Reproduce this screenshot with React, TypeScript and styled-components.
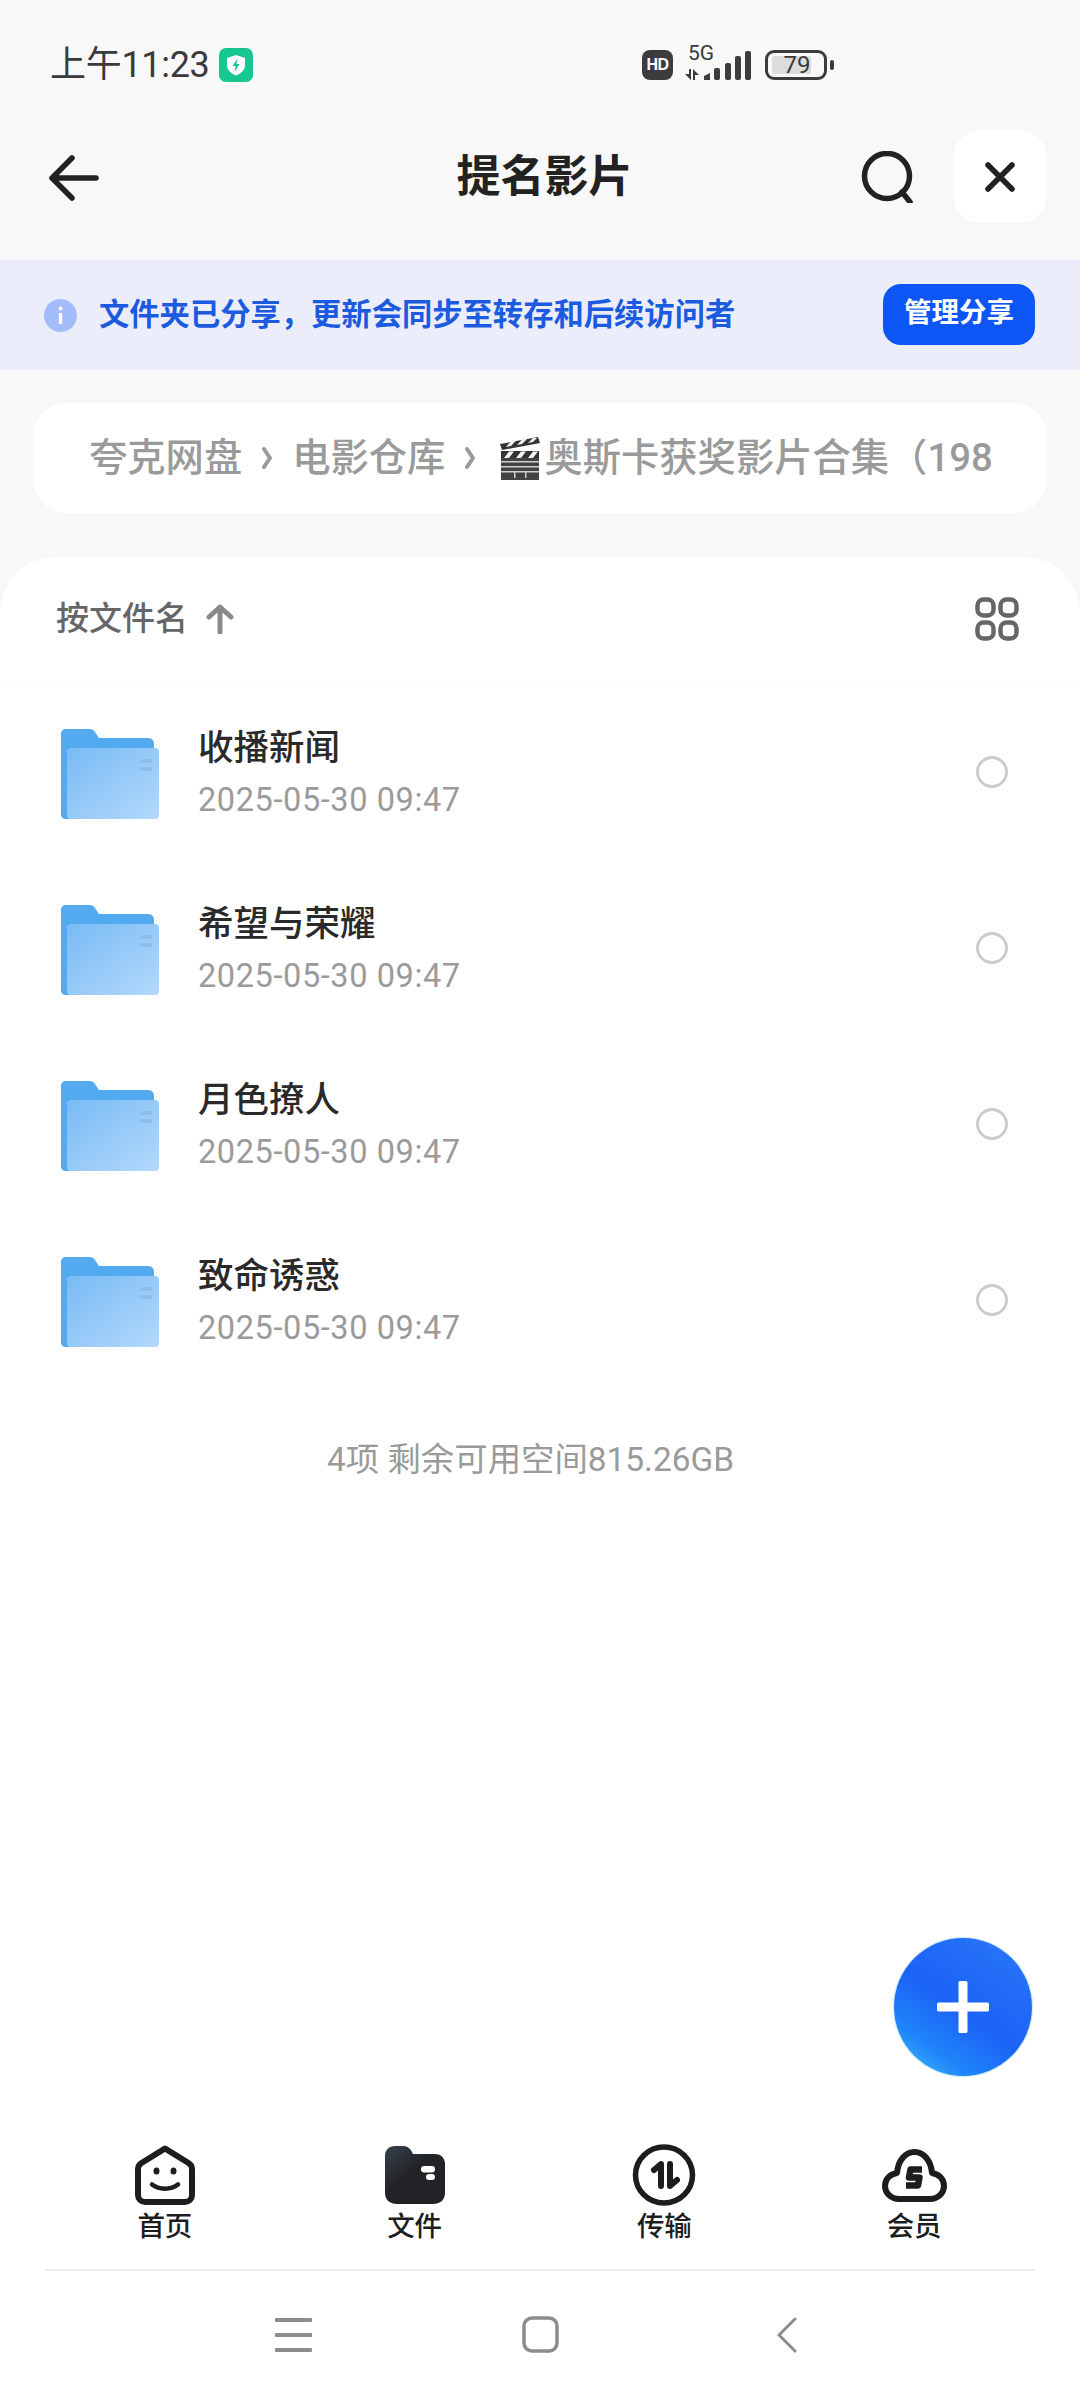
import { FC } from "react";
import styled, { createGlobalStyle } from "styled-components";

const GlobalStyle = createGlobalStyle`
  html, body {
    margin: 0;
    padding: 0;
    background: #f8f8f9;
  }
  * {
    box-sizing: border-box;
  }
`;

const Page = styled.div`
  position: relative;
  width: 1080px;
  height: 2400px;
  overflow: hidden;
  display: flex;
  flex-direction: column;
  background: #f8f8f9;
  font-family: Roboto, "Noto Sans CJK SC", sans-serif;
  color: #1d1d1f;
`;

// 状态栏
const StatusBar = styled.div`
  height: 130px;
  padding: 0 246px 1px 50px;
  display: flex;
  align-items: center;
  justify-content: space-between;
`;

const StatusLeft = styled.div`
  display: flex;
  align-items: center;
  gap: 9px;
`;

const Clock = styled.span`
  font-size: 36px;
  line-height: 44px;
  letter-spacing: -0.3px;
  color: #3a3a3a;
`;

const StatusRight = styled.div`
  display: flex;
  align-items: center;
`;

const HdBadge = styled.span`
  width: 31px;
  height: 30px;
  border-radius: 8px;
  background: #3c3c3c;
  color: #fff;
  font-size: 16px;
  font-weight: 700;
  line-height: 30px;
  text-align: center;
  letter-spacing: -0.5px;
  font-family: "Liberation Sans", sans-serif;
`;

const Signal = styled.div`
  position: relative;
  width: 68px;
  height: 40px;
  margin: 0 13px 0 11px;
`;

const FiveG = styled.span`
  position: absolute;
  left: 4px;
  top: -3px;
  font-size: 21px;
  line-height: 22px;
  color: #3a3a3a;
`;

const Battery = styled.div`
  width: 62px;
  height: 30px;
  border: 3px solid #3c3c3c;
  border-radius: 9px;
  padding: 3px 13px 3px 4px;
  display: flex;
`;

const BatteryFill = styled.div`
  flex: 1;
  padding-left: 11px;
  background: #dcdcdc;
  border-radius: 2px;
  font-size: 24px;
  line-height: 18px;
  text-align: center;
  color: #3a3a3a;
  white-space: nowrap;
`;

const BatteryNub = styled.div`
  width: 4px;
  height: 10px;
  margin-left: 3px;
  border-radius: 2px;
  background: #3c3c3c;
`;

// 顶部导航
const Header = styled.header`
  height: 130px;
  padding: 1px 33px 0 49px;
  display: grid;
  grid-template-columns: 1fr auto 1fr;
  align-items: start;
`;

const BackButton = styled.div`
  margin-top: 24px;
  height: 46px;
`;

const Title = styled.h1`
  margin: 0;
  padding-right: 7px;
  font-size: 44px;
  line-height: 92px;
  font-weight: 700;
  color: #222;
`;

const Actions = styled.div`
  margin-top: -1px;
  display: flex;
  justify-content: flex-end;
  align-items: center;
  gap: 38px;
`;

const CloseButton = styled.div`
  width: 94px;
  height: 93px;
  border-radius: 28px;
  background: #fff;
  display: flex;
  align-items: center;
  justify-content: center;
`;

// 分享提示条
const Banner = styled.div`
  height: 110px;
  padding: 0 45px 0 44px;
  display: flex;
  align-items: center;
  background: #ebeefa;
`;

const BannerText = styled.span`
  flex: 1;
  margin-left: 22px;
  font-size: 30.3px;
  line-height: 40px;
  font-weight: 700;
  color: #1c5ae0;
  white-space: nowrap;
`;

const ManageButton = styled.div`
  width: 152px;
  height: 61px;
  margin-top: -2px;
  border-radius: 18px;
  background: #0d55f5;
  color: #fff;
  font-size: 27.5px;
  font-weight: 700;
  line-height: 57px;
  text-align: center;
`;

// 面包屑
const Breadcrumb = styled.nav`
  height: 110px;
  margin: 33px 33px 44px;
  padding: 0 50px 0 56px;
  border-radius: 34px;
  background: #fff;
  display: flex;
  align-items: center;
  overflow: hidden;
  white-space: nowrap;
  font-size: 38.3px;
  font-weight: 500;
  line-height: 48px;
  color: #9a9a9a;
`;

const Crumb = styled.span`
  flex-shrink: 0;
`;

const CrumbSeparator = styled.svg`
  flex-shrink: 0;
  margin: 0 20px;
`;

const Clapper = styled.svg`
  flex-shrink: 0;
  margin: 0 4px 0 5px;
`;

// 文件列表
const Sheet = styled.main`
  flex: 1;
  display: flex;
  flex-direction: column;
  background: #fff;
  border-radius: 56px 56px 0 0;
`;

const SortRow = styled.div`
  height: 127px;
  padding: 0 61px 3px 56px;
  display: flex;
  align-items: center;
  border-bottom: 1px solid #fbfbfb;
`;

const SortLabel = styled.span`
  font-size: 33px;
  line-height: 42px;
  font-weight: 500;
  color: #666;
`;

const SortArrow = styled.svg`
  margin-left: 18px;
`;

const ViewToggle = styled.svg`
  margin-left: auto;
`;

const List = styled.ul`
  margin: 0;
  padding: 0;
  list-style: none;
`;

const Row = styled.li`
  height: 176px;
  padding: 0 72px 0 60px;
  display: flex;
  align-items: center;
`;

const FolderGlyph = styled.svg`
  flex-shrink: 0;
  margin-top: 4px;
`;

const RowText = styled.div`
  flex: 1;
  margin-left: 38px;
  padding-top: 2px;
`;

const RowTitle = styled.div`
  font-size: 35.5px;
  line-height: 44px;
  font-weight: 500;
  color: #2a2a2a;
`;

const RowDate = styled.div`
  margin-top: 10px;
  font-size: 32.5px;
  line-height: 40px;
  letter-spacing: 0.6px;
  color: #9a9a9a;
`;

const Radio = styled.div`
  width: 32px;
  height: 32px;
  border: 3px solid #cdcdcd;
  border-radius: 50%;
`;

const Summary = styled.div`
  margin-top: 52px;
  padding-right: 19px;
  font-size: 33.4px;
  line-height: 40px;
  text-align: center;
  color: #9a9a9a;
`;

const Fab = styled.div`
  position: absolute;
  left: 894px;
  top: 1938px;
  width: 138px;
  height: 138px;
  border-radius: 50%;
  background: linear-gradient(215deg, #2a78f8 0%, #1c62f6 52%, #1f86f9 78%, #45c8fc 100%);
  box-shadow: 0 0 0 1px #c4ecfd;
  display: flex;
  align-items: center;
  justify-content: center;
`;

// 底部标签栏
const TabBar = styled.div`
  margin-top: auto;
  padding: 0 41px 0 40px;
  display: grid;
  grid-template-columns: repeat(4, 1fr);
`;

const Tab = styled.div`
  display: flex;
  flex-direction: column;
  align-items: center;
`;

const TabIcon = styled.div`
  height: 66px;
  display: flex;
  align-items: center;
  justify-content: center;
`;

const TabLabel = styled.span`
  margin-top: 1px;
  font-size: 27.5px;
  font-weight: 500;
  line-height: 36px;
  color: #1d1d1f;
`;

const Divider = styled.div`
  height: 2px;
  margin: 24px 45px 0;
  background: #ececec;
`;

const SystemNav = styled.div`
  height: 129px;
  padding-bottom: 2px;
  display: grid;
  grid-template-columns: 247px 247px 247px;
  justify-content: center;
  align-items: center;
  justify-items: center;
`;

const files = ["收播新闻", "希望与荣耀", "月色撩人", "致命诱惑"];

const FolderIcon: FC = () => (
  <FolderGlyph width="100" height="91" viewBox="0 0 100 91">
    <defs>
      <linearGradient id="folderFront" x1="0" y1="0" x2="1" y2="1">
        <stop offset="0" stopColor="#79bbf5" />
        <stop offset="1" stopColor="#b2d9fb" />
      </linearGradient>
    </defs>
    <path
      d="M6 0H29C32 0 34 1 35 3L39 9H88C92 9 94 12 94 15V40H12V90H6C3 90 1 88 1 85V5C1 2 3 0 6 0Z"
      fill="#53aaf1"
    />
    <rect x="7" y="19" width="92" height="71" rx="4" fill="url(#folderFront)" />
    <rect x="80" y="30" width="12" height="4" rx="1" fill="#8dbfe9" />
    <rect x="80" y="38" width="12" height="4" rx="1" fill="#8dbfe9" />
  </FolderGlyph>
);

const App: FC = () => {
  return (
    <Page>
      <GlobalStyle />
      <StatusBar>
        <StatusLeft>
          <Clock>上午11:23</Clock>
          <svg width="34" height="34" viewBox="0 0 34 34">
            <rect width="34" height="34" rx="7" fill="#17c791" />
            <path d="M17 7L26 10V17C26 22 22 25.500 17 27.500C12 25.500 8 22 8 17V10Z" fill="#fff" />
            <path d="M18.500 10.500L13.500 18H16.500L15.500 24L20.500 16H17.500Z" fill="#17c791" />
          </svg>
        </StatusLeft>
        <StatusRight>
          <HdBadge>HD</HdBadge>
          <Signal>
            <FiveG>5G</FiveG>
            <svg width="68" height="40" viewBox="0 0 68 40" fill="#3c3c3c">
              <path d="M5 24H7V35L1 29H5ZM9 24L15 30H11V35H9Z" />
              <path d="M20 31L26 28V35H20Z" />
              <rect x="30" y="23" width="6" height="12" rx="2" />
              <rect x="41" y="18" width="6" height="17" rx="2" />
              <rect x="51" y="11" width="6" height="24" rx="2" />
              <rect x="61" y="6" width="6" height="29" rx="2" />
            </svg>
          </Signal>
          <Battery>
            <BatteryFill>79</BatteryFill>
          </Battery>
          <BatteryNub />
        </StatusRight>
      </StatusBar>

      <Header>
        <BackButton>
          <svg width="50" height="46" viewBox="0 0 50 46" fill="none" stroke="#222" strokeWidth="5.500" strokeLinecap="round" strokeLinejoin="round">
            <path d="M23 3L3 23L23 43M3 23H47" />
          </svg>
        </BackButton>
        <Title>提名影片</Title>
        <Actions>
          <svg width="54" height="52" viewBox="0 0 54 52" fill="none" stroke="#222" strokeWidth="5.500">
            <circle cx="26" cy="25" r="22.500" />
            <path d="M41 41L49 51" strokeLinecap="round" />
          </svg>
          <CloseButton>
            <svg width="30" height="30" viewBox="0 0 30 30" fill="none" stroke="#222" strokeWidth="5.500" strokeLinecap="round">
              <path d="M3 3L27 27M27 3L3 27" />
            </svg>
          </CloseButton>
        </Actions>
      </Header>

      <Banner>
        <svg width="33" height="33" viewBox="0 0 33 33">
          <circle cx="16.500" cy="16.500" r="16.500" fill="#a3bcfa" />
          <rect x="14.800" y="14" width="3.400" height="11" rx="1" fill="#fff" />
          <circle cx="16.500" cy="9.500" r="2" fill="#fff" />
        </svg>
        <BannerText>文件夹已分享，更新会同步至转存和后续访问者</BannerText>
        <ManageButton>管理分享</ManageButton>
      </Banner>

      <Breadcrumb>
        <Crumb>夸克网盘</Crumb>
        <CrumbSeparator width="10" height="24" viewBox="0 0 10 24" fill="none" stroke="#9a9a9a" strokeWidth="4" strokeLinecap="round">
          <path d="M2 3L8 12L2 21" />
        </CrumbSeparator>
        <Crumb>电影仓库</Crumb>
        <CrumbSeparator width="10" height="24" viewBox="0 0 10 24" fill="none" stroke="#9a9a9a" strokeWidth="4" strokeLinecap="round">
          <path d="M2 3L8 12L2 21" />
        </CrumbSeparator>
        <Clapper width="40" height="43" viewBox="0 0 40 43">
          <path d="M1 14H39V43H1Z" fill="#434343" />
          <path d="M0 7L38 0L40 6L2 13Z" fill="#333" />
          <path d="M1 14H39V21H1Z" fill="#333" />
          <path d="M6 10L12 3L17 2.500L11 9ZM17 8L23 1.500L28 1L22 7ZM28 6L33 1L37 1L33 5Z" fill="#f2f2f2" />
          <path d="M4 21L9 14.500H14L9 21ZM16 21L21 14.500H26L21 21ZM28 21L33 14.500H38L33 21Z" fill="#f2f2f2" />
          <path d="M1 24H39V25.500H1ZM1 29H39V30.500H1ZM1 34H39V35.500H1ZM14 35H15.500V41H14ZM25 35H26.500V41H25Z" fill="#cfcfcf" />
        </Clapper>
        <Crumb>奥斯卡获奖影片合集（198</Crumb>
      </Breadcrumb>

      <Sheet>
        <SortRow>
          <SortLabel>按文件名</SortLabel>
          <SortArrow width="28" height="30" viewBox="0 0 28 30" fill="none" stroke="#8a8a8a" strokeWidth="5" strokeLinecap="round" strokeLinejoin="round">
            <path d="M3 13L14 3L25 13M14 3V28" />
          </SortArrow>
          <ViewToggle width="44" height="44" viewBox="0 0 44 44" fill="none" stroke="#666" strokeWidth="4.500">
            <rect x="2.500" y="2.500" width="16" height="16" rx="6" />
            <rect x="25.500" y="2.500" width="16" height="16" rx="6" />
            <rect x="2.500" y="25.500" width="16" height="16" rx="6" />
            <rect x="25.500" y="25.500" width="16" height="16" rx="6" />
          </ViewToggle>
        </SortRow>

        <List>
          {files.map((name) => (
            <Row key={name}>
              <FolderIcon />
              <RowText>
                <RowTitle>{name}</RowTitle>
                <RowDate>2025-05-30 09:47</RowDate>
              </RowText>
              <Radio />
            </Row>
          ))}
        </List>

        <Summary>4项 剩余可用空间815.26GB</Summary>

        <TabBar>
          <Tab>
            <TabIcon>
              <svg width="60" height="60" viewBox="0 0 60 60">
                <path
                  d="M30 3.500L53.500 18C56 19.500 57 21.500 57 24V50C57 54 54 57 50 57H10C6 57 3 54 3 50V24C3 21.500 4 19.500 6.500 18Z"
                  fill="none"
                  stroke="#1d1d1f"
                  strokeWidth="6"
                  strokeLinejoin="round"
                />
                <ellipse cx="21.500" cy="26" rx="3" ry="3.500" fill="#1d1d1f" />
                <ellipse cx="38.500" cy="26" rx="3" ry="3.500" fill="#1d1d1f" />
                <path d="M17 39.500C24 45 36 45 43 39.500" fill="none" stroke="#1d1d1f" strokeWidth="4.500" strokeLinecap="round" />
              </svg>
            </TabIcon>
            <TabLabel>首页</TabLabel>
          </Tab>
          <Tab>
            <TabIcon>
              <svg width="60" height="58" viewBox="0 0 60 58">
                <defs>
                  <linearGradient id="tabFile" x1="0" y1="0" x2="0.700" y2="0.800">
                    <stop offset="0" stopColor="#37424c" />
                    <stop offset="0.600" stopColor="#222326" />
                  </linearGradient>
                </defs>
                <path d="M10 0H18C23 0 26 3 28 8H50C56 8 60 12 60 18V47C60 54 55 58 48 58H12C5 58 0 54 0 47V10C0 4 4 0 10 0Z" fill="url(#tabFile)" />
                <rect x="36" y="20" width="14" height="6.500" rx="3.200" fill="#fff" />
                <rect x="41" y="28" width="9" height="6" rx="3" fill="#fff" />
              </svg>
            </TabIcon>
            <TabLabel>文件</TabLabel>
          </Tab>
          <Tab>
            <TabIcon>
              <svg width="64" height="62" viewBox="0 0 64 62" fill="none" stroke="#1d1d1f" strokeLinecap="round" strokeLinejoin="round">
                <ellipse cx="32" cy="31" rx="28.500" ry="28" strokeWidth="5.500" />
                <path d="M29 42V20L22 26" strokeWidth="6" />
                <path d="M38 20V42L45 36" strokeWidth="6" />
              </svg>
            </TabIcon>
            <TabLabel>传输</TabLabel>
          </Tab>
          <Tab>
            <TabIcon>
              <svg width="65" height="53" viewBox="0 0 65 53">
                <path
                  d="M17 50H48C56 50 62 44 62 37C62 30 57 25 50 24C49 12 42 3 32.500 3C23 3 16 12 15 24C8 25 3 30 3 37C3 44 9 50 17 50Z"
                  fill="none"
                  stroke="#1d1d1f"
                  strokeWidth="6"
                  strokeLinejoin="round"
                />
                <path d="M40 20.500H28.500L27 28.500H37.500L36 36.500H24" fill="none" stroke="#1d1d1f" strokeWidth="6.500" strokeLinejoin="round" />
              </svg>
            </TabIcon>
            <TabLabel>会员</TabLabel>
          </Tab>
        </TabBar>
        <Divider />

        <SystemNav>
          <svg width="37" height="34" viewBox="0 0 37 34" fill="#8c8c8c">
            <rect y="0" width="37" height="4" rx="1" />
            <rect y="15" width="37" height="4" rx="1" />
            <rect y="30" width="37" height="4" rx="1" />
          </svg>
          <svg width="37" height="37" viewBox="0 0 37 37" fill="none" stroke="#8c8c8c" strokeWidth="3.500">
            <rect x="2" y="2" width="33" height="33" rx="8" />
          </svg>
          <svg width="20" height="36" viewBox="0 0 20 36" fill="none" stroke="#8c8c8c" strokeWidth="3" strokeLinecap="round">
            <path d="M18 2L2 18L18 34" />
          </svg>
        </SystemNav>
      </Sheet>

      <Fab>
        <svg width="52" height="52" viewBox="0 0 52 52" fill="#fff">
          <rect x="21.500" y="0" width="9" height="52" rx="1.500" />
          <rect x="0" y="21.500" width="52" height="9" rx="1.500" />
        </svg>
      </Fab>
    </Page>
  );
};

export default App;
